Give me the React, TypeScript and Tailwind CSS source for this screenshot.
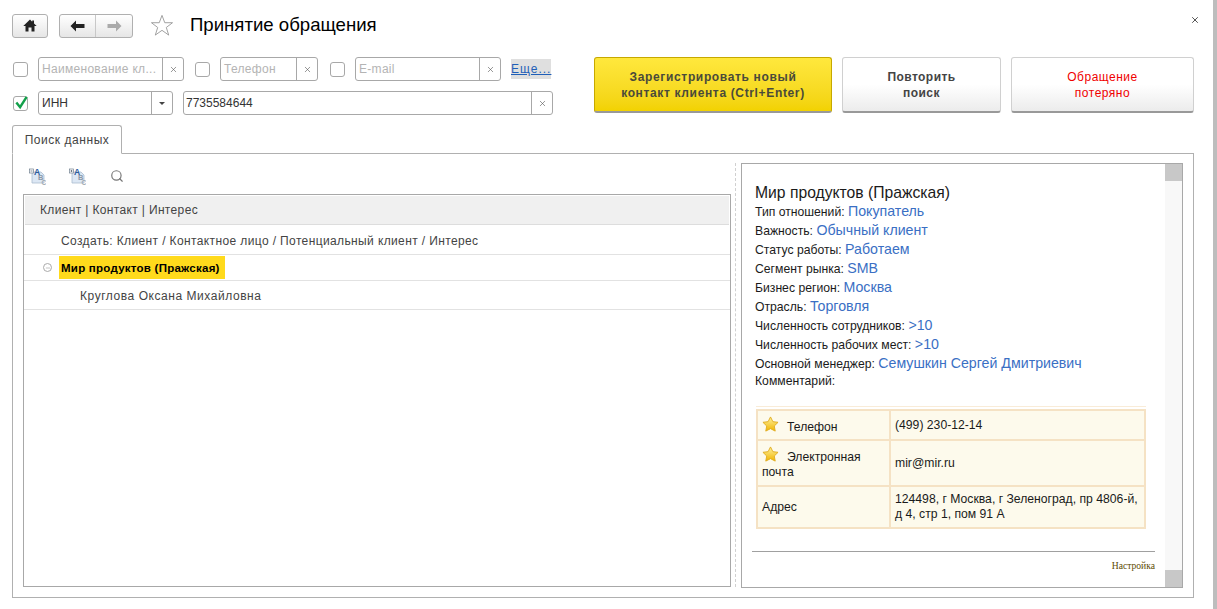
import React from "react";
import { Search, X, Minus } from "lucide-react";

const rows = [
    { label: "Тип отношений:", value: "Покупатель" },
    { label: "Важность:", value: "Обычный клиент" },
    { label: "Статус работы:", value: "Работаем" },
    { label: "Сегмент рынка:", value: "SMB" },
    { label: "Бизнес регион:", value: "Москва" },
    { label: "Отрасль:", value: "Торговля" },
    { label: "Численность сотрудников:", value: ">10" },
    { label: "Численность рабочих мест:", value: ">10" },
    { label: "Основной менеджер:", value: "Семушкин Сергей Дмитриевич" },
];

const GoldStar = () => (
    <svg viewBox="0 0 18 18" className="w-[17px] h-[17px] inline-block align-[1px] -my-[3px]">
        <defs>
            <linearGradient id="gold" x1="0" y1="0" x2="0" y2="1">
                <stop offset="0" stopColor="#fff3a0" />
                <stop offset="1" stopColor="#f0b400" />
            </linearGradient>
        </defs>
        <path d="M9 1l2.500 5 5.500.7-4 3.900 1 5.400-5-2.600L4 16l1-5.400-4-3.900 5.500-.7z" fill="url(#gold)" stroke="#e0ac20" strokeWidth="1" strokeLinejoin="round" />
    </svg>
);

const TreeIcon = ({ plus }: { plus?: boolean }) => (
    <svg viewBox="0 0 17 17" className="w-[17px] h-[17px]">
        <path d="M3 4h9l3 3v8H3z" fill="#dce7f4" stroke="#a9bccf" strokeWidth="0.8" />
        <rect x="0.5" y="1" width="4" height="4" fill="#fff" stroke="#6f7f8f" strokeWidth="0.7" />
        <path d={plus ? "M2.500 2v2M1.500 3h2" : "M1.500 3h2"} stroke="#4a5a6a" strokeWidth="0.7" />
        <text x="5" y="7" fontSize="8.500" fontWeight="700" fill="#2a5a9a" fontFamily="Liberation Sans, sans-serif">A</text>
        <text x="9" y="12" fontSize="7.500" fontWeight="700" fill="#8a98a8" fontFamily="Liberation Sans, sans-serif">B</text>
        <text x="12.500" y="16.800" fontSize="6.500" fontWeight="700" fill="#a0a8b0" fontFamily="Liberation Sans, sans-serif">C</text>
    </svg>
);

const Clear = () => (
    <div className="w-[21px] h-full flex items-center justify-center border-l border-[#a8a8a8] shrink-0">
        <X size={9} strokeWidth={1.6} className="text-[#555]" />
    </div>
);

const Check = ({ on }: { on?: boolean }) => (
    <div className="w-[15px] h-[15px] border border-[#a8a8a8] rounded-[3px] bg-white relative shrink-0">
        {on && (
            <svg viewBox="0 0 16 16" className="absolute left-0 -top-[2px] w-[15px] h-[15px]">
                <path d="M2.500 8l4 5 7-11" fill="none" stroke="#12a04a" strokeWidth="2.600" />
            </svg>
        )}
    </div>
);

const Field = ({ w, text }: { w: string; text: string }) => (
    <div className={`${w} h-6 border border-[#a8a8a8] rounded-[3px] flex items-center bg-white shrink-0`}>
        <div className="flex-1 min-w-0 pl-[3px] text-[12px] text-[#b4b4b4] tracking-[0.3px] whitespace-nowrap overflow-hidden">{text}</div>
        <Clear />
    </div>
);

const App: React.FC = () => {
    return (
        <div className="w-[1217px] h-[609px] bg-white relative overflow-hidden text-[#333]" style={{ fontFamily: '"Liberation Sans", Arial, sans-serif' }}>
            <div className="flex items-center h-[50px] pl-3">
                <div className="w-9 h-6 mt-[1px] border border-[#b0b0b0] rounded-[3px] bg-gradient-to-b from-white to-[#e6e6e6] flex items-center justify-center">
                    <svg viewBox="0 0 14 13" className="w-[14px] h-[13px]">
                        <path d="M7 .5L.3 7h2.200v5.500h3V8.500h3v4h3V7h2.200L11 4.400V1.500H9.200v1.200z" fill="#222" />
                    </svg>
                </div>
                <div className="ml-[11px] mt-[1px] w-[74px] h-6 border border-[#b0b0b0] rounded-[3px] bg-gradient-to-b from-white to-[#e6e6e6] flex">
                    <div className="w-9 flex items-center justify-center border-r border-[#c8c8c8]">
                        <svg viewBox="0 0 15 12" className="w-[15px] h-3">
                            <path d="M.5 6L6 .5V4h8.500v4H6v3.500z" fill="#222" />
                        </svg>
                    </div>
                    <div className="flex-1 flex items-center justify-center">
                        <svg viewBox="0 0 15 12" className="w-[15px] h-3">
                            <path d="M14.500 6L9 .5V4H.5v4H9v3.500z" fill="#aaa" />
                        </svg>
                    </div>
                </div>
                <svg viewBox="0 0 24 24" className="ml-[18px] w-[22px] h-[22px]">
                    <path d="M12 1.500l3 8h8.500l-6.800 5.200 2.600 8.300-7.300-5.200L4.700 23l2.600-8.300L.5 9.500H9z" fill="#fff" stroke="#999" strokeWidth="1" strokeLinejoin="miter" />
                </svg>
                <h1 className="ml-[17px] text-[18.6px] text-black">Принятие обращения</h1>
            </div>
            <X size={10} strokeWidth={2.2} className="absolute right-[17px] top-[15px] text-[#444]" />

            <div className="flex pl-[13px] pr-[23px] h-[67px] mt-[7px]">
                <div className="w-[540px]">
                    <div className="flex items-center h-6">
                        <Check />
                        <div className="ml-[10px]"><Field w="w-[146px]" text="Наименование кл..." /></div>
                        <div className="ml-[11px]"><Check /></div>
                        <div className="ml-[10px]"><Field w="w-[98px]" text="Телефон" /></div>
                        <div className="ml-[12px]"><Check /></div>
                        <div className="ml-[10px]"><Field w="w-[146px]" text="E-mail" /></div>
                        <a className="ml-[10px] text-[12px] text-[#1f5fb8] underline bg-[#dfdfdf] tracking-[1px] leading-[20px]">Еще...</a>
                    </div>
                    <div className="flex items-center h-6 mt-[10px]">
                        <Check on />
                        <div className="ml-[10px] w-[135px] h-6 border border-[#a8a8a8] rounded-[3px] flex items-center">
                            <div className="flex-1 pl-[3px] text-[12px] text-[#333]">ИНН</div>
                            <div className="w-[21px] h-full flex items-center justify-center border-l border-[#a8a8a8]">
                                <svg viewBox="0 0 6 3" className="w-[6px] h-[3px]">
                                    <path d="M0 0h6L3 3z" fill="#444" />
                                </svg>
                            </div>
                        </div>
                        <div className="ml-[10px] w-[370px] h-6 border border-[#a8a8a8] rounded-[3px] flex items-center">
                            <div className="flex-1 pl-[2px] text-[12px] text-[#333]">7735584644</div>
                            <Clear />
                        </div>
                    </div>
                </div>
                <div className="ml-[41px] flex gap-[10px] h-[57px]">
                    <button className="w-[238px] h-[56px] rounded-[3px] border border-[#c6a800] border-b-2 border-b-[#999] bg-gradient-to-b from-[#ffe83c] to-[#f2d200] text-[12px] font-bold leading-[16px] tracking-[0.65px] text-[#4a4a3a]">
                        Зарегистрировать новый<br />контакт клиента (Ctrl+Enter)
                    </button>
                    <button className="w-[159px] h-[56px] rounded-[3px] border border-[#d0d0d0] border-b-2 border-b-[#999] bg-gradient-to-b from-white via-white to-[#ececec] text-[12px] font-bold leading-[16px] tracking-[0.45px] text-[#444]">
                        Повторить<br />поиск
                    </button>
                    <button className="w-[183px] h-[56px] rounded-[3px] border border-[#d0d0d0] border-b-2 border-b-[#999] bg-gradient-to-b from-white via-white to-[#ececec] text-[12px] leading-[16px] tracking-[0.5px] text-[#f00000]">
                        Обращение<br />потеряно
                    </button>
                </div>
            </div>

            <div className="pl-3 pr-[23px] mt-[1px]">
                <div className="relative z-10 w-[110px] h-[29px] border border-[#b0b0b0] border-b-white rounded-t-[3px] bg-white flex items-center justify-center text-[12px] tracking-[0.55px] text-[#444]">
                    Поиск данных
                </div>
                <div className="-mt-px h-[445px] border border-[#b0b0b0] flex pl-[10px] pr-[10px] pt-[9px]">
                    <div className="w-[708px] flex flex-col pb-[10px]">
                        <div className="flex items-center h-[31px] pb-[5px] pl-[6px] gap-[23px]">
                            <TreeIcon />
                            <TreeIcon plus />
                            <Search size={14} strokeWidth={2} className="text-[#777] ml-[1px]" />
                        </div>
                        <div className="flex-1 border border-[#a8a8a8] text-[12px] text-[#444] tracking-[0.35px]">
                            <div className="h-[29px] m-[1px] mb-0 bg-[#f0f0f0] border-b border-[#ddd] flex items-center pl-[15px]">Клиент | Контакт | Интерес</div>
                            <div className="h-[30px] pt-[2px] border-b border-[#e2e2e2] flex items-center pl-[37px] tracking-[0.38px]">Создать: Клиент / Контактное лицо / Потенциальный клиент / Интерес</div>
                            <div className="h-[26px] border-b border-[#e2e2e2] flex items-center pl-[19px]">
                                <div className="w-[9px] h-[9px] rounded-full border border-[#aaa] flex items-center justify-center">
                                    <Minus size={6} strokeWidth={2} className="text-[#888]" />
                                </div>
                                <span className="ml-[7px] bg-[#ffda1c] h-[23px] w-[166px] flex items-center pl-[2px] pt-[2px] font-bold text-black text-[11.5px] whitespace-nowrap tracking-[0.25px]">Мир продуктов (Пражская)</span>
                            </div>
                            <div className="h-[29px] pt-[2px] border-b border-[#e2e2e2] flex items-center pl-[56px] tracking-[0.55px]">Круглова Оксана Михайловна</div>
                        </div>
                    </div>
                    <div className="ml-[4px] w-px h-[424px] border-r border-dashed border-[#d0d0d0]" />
                    <div className="ml-[5px] flex-1 h-[425px] border border-[#a8a8a8] flex">
                        <div className="flex-1 pl-[13px] pr-[10px] pt-[18px] min-w-0 text-[#1a1a1a]">
                            <div className="text-[15.7px] leading-[21px]">Мир продуктов (Пражская)</div>
                            {rows.map((r) => (
                                <div key={r.label} className="h-[19px] text-[12.2px] leading-[19px] whitespace-nowrap">
                                    {r.label} <span className="text-[14.2px] leading-[14px] text-[#3a6fc4]">{r.value}</span>
                                </div>
                            ))}
                            <div className="text-[12.2px] leading-[14px]">Комментарий:</div>
                            <div className="mt-[18px] ml-[1px] w-[390px] border-t border-[#f9ecd8] pt-[2px]">
                                <table className="w-full border-collapse border-[2px] border-[#f5e2c4] bg-[#fdfaec] text-[12.2px] leading-[15px]">
                                    <tbody>
                                        <tr className="h-[30px]">
                                            <td className="w-[133px] border-[2px] border-[#f5e2c4] pl-[4px] pr-[5px] pt-[3px]"><GoldStar /><span className="ml-[8px]">Телефон</span></td>
                                            <td className="border-[2px] border-[#f5e2c4] px-[4px]">(499) 230-12-14</td>
                                        </tr>
                                        <tr className="h-[46px]">
                                            <td className="border-[2px] border-[#f5e2c4] pl-[4px] pr-[5px] pt-[3px]"><GoldStar /><span className="ml-[8px]">Электронная почта</span></td>
                                            <td className="border-[2px] border-[#f5e2c4] px-[4px]">mir@mir.ru</td>
                                        </tr>
                                        <tr className="h-[42px]">
                                            <td className="border-[2px] border-[#f5e2c4] px-[4px]">Адрес</td>
                                            <td className="border-[2px] border-[#f5e2c4] px-[4px] whitespace-nowrap">124498, г Москва, г Зеленоград, пр 4806-й,<br />д 4, стр 1, пом 91 А</td>
                                        </tr>
                                    </tbody>
                                </table>
                            </div>
                            <div className="mt-[22px] -ml-[3px] border-t border-[#a0a0a0] pt-[7px] text-right text-[9.6px] leading-[14px] text-[#5c4a00]" style={{ fontFamily: '"Liberation Serif", serif' }}>Настройка</div>
                        </div>
                        <div className="w-[17px] bg-[#f8f8f8] flex flex-col justify-between shrink-0">
                            <div className="h-[17px] bg-[#c8c8c8]" />
                            <div className="h-[17px] bg-[#c8c8c8]" />
                        </div>
                    </div>
                </div>
            </div>
            <div className="absolute right-0 top-0 bottom-0 w-[4px] bg-[#bdbdbd]" />
        </div>
    );
};

export default App;
